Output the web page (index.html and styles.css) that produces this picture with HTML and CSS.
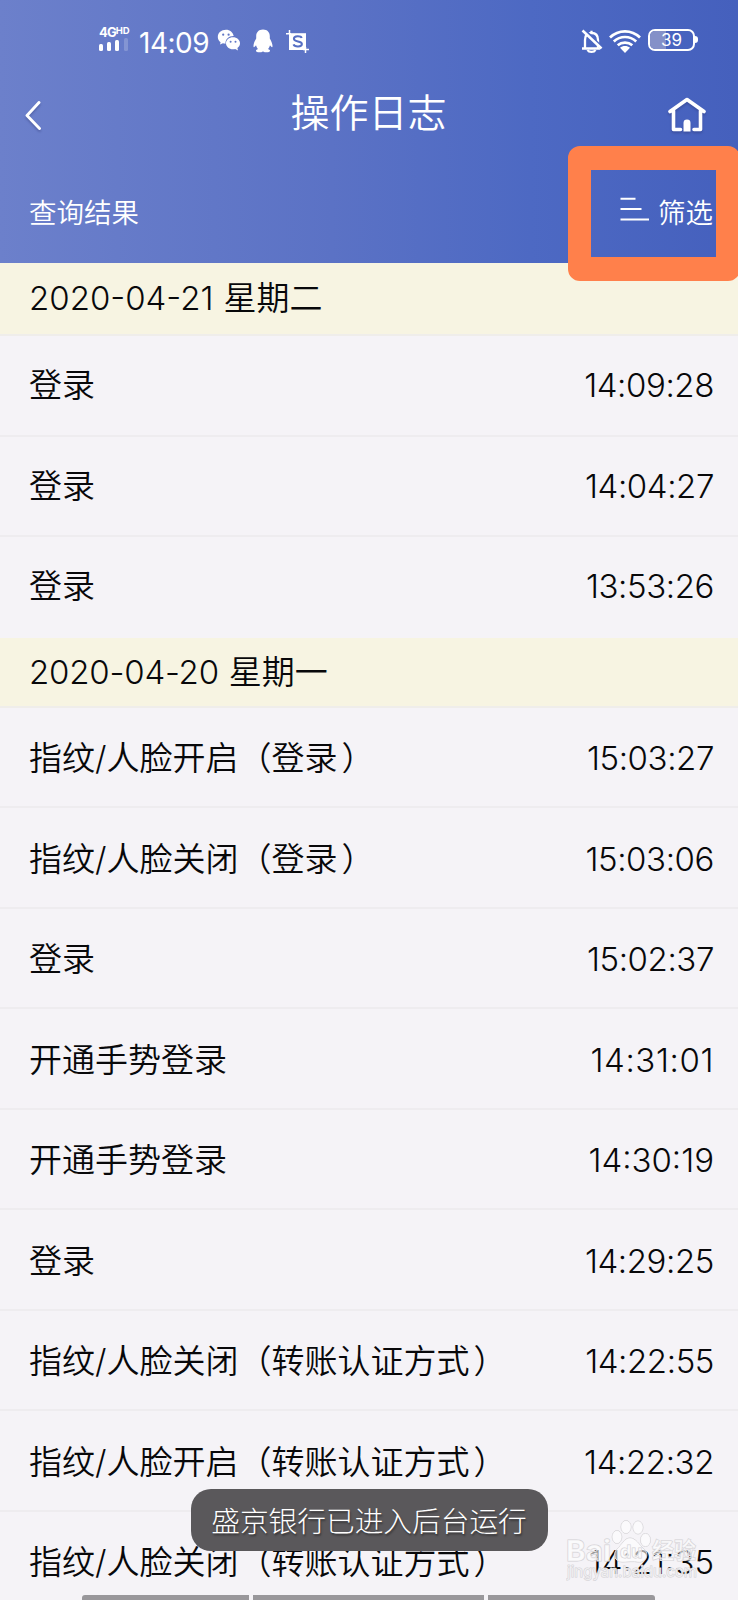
FILE: index.html
```html
<!DOCTYPE html>
<html lang="zh-CN">
<head>
<meta charset="utf-8">
<title>操作日志</title>
<link rel="stylesheet" href="styles.css">
</head>
<body>
<div class="screen">
  <header class="header">
    <div class="status">
      <div class="network">
        <div class="network-label">4G<span class="hd">HD</span></div>
        <div class="bars"><i class="b1"></i><i class="b2"></i><i class="b3"></i><i class="b4"></i></div>
      </div>
      <span class="clock">14:09</span>
      <svg class="wechat" width="24" height="24" viewBox="0 0 24 24"><path fill="#fff" d="M9 .8C4.300.8.8 3.900.8 7.900c0 2.200 1.100 4.100 2.800 5.300L3 15.600l2.900-1.300c.9.300 1.700.4 2.600.4-.3-4.500 3.300-7.800 8.200-7.700C16 3.400 13 .8 9 .8Z"/><path fill="#fff" d="M16 8.300c-4 0-7 2.700-7 6s3 6 7 6c.8 0 1.500-.1 2.200-.3l2.800 1.600-.6-2.500c1.600-1.100 2.600-2.800 2.600-4.800 0-3.300-3-6-7-6Z"/><g fill="#6077c5"><circle cx="6.200" cy="5.700" r="1.100"/><circle cx="11.600" cy="5.700" r="1.100"/><circle cx="13.600" cy="12.700" r="1"/><circle cx="18.500" cy="12.700" r="1"/></g></svg>
      <svg class="qq" width="22" height="24" viewBox="0 0 22 24"><path fill="#fff" d="M11 .5c-4.400 0-6.800 2.900-6.800 6.700v2.200C2.800 12 1.300 14.800 1.500 17.500c.1 1.300 1.300.6 2.500-1.200.3 1.500 1 2.700 1.900 3.600-1.200.5-2 1.200-1.900 2 .2 1.700 5.100 1.700 7 .5 1.900 1.200 6.800 1.200 7-.5.1-.8-.7-1.500-1.900-2 .9-.9 1.600-2.100 1.900-3.600 1.200 1.800 2.400 2.500 2.500 1.200.2-2.700-1.300-5.500-2.700-8.100V7.200C17.800 3.400 15.400.5 11 .5Z"/></svg>
      <svg class="snip" width="23" height="23" viewBox="0 0 23 23"><path fill="#fff" d="M3 3.200h17V20H3z"/><path d="M3.500 0v4.500M0 3.700h5M19.500 17v6M17 19.500h6" stroke="#fff" stroke-width="1.500"/><path d="M15.700 8c-.8-2.200-7.800-2.500-7.800.8 0 3.600 8 1.700 8 5.200 0 3.100-7.300 3.200-8.400.4" fill="none" stroke="#566fc4" stroke-width="2"/></svg>
      <div class="status-right">
        <svg width="23" height="25" viewBox="0 0 23 25"><g fill="none" stroke="#fff" stroke-width="2.300"><path d="M1 19.500h18M4 19.500V11c0-5 2.400-7 6.500-7S17 6 17 11v8M10.500 1.800v2"/><path d="M6.500 21c1.500 2.600 6.500 2.600 8 0"/></g><path d="M3.300 1.200 22 20" stroke="#4c68c3" stroke-width="3.500"/><path d="M1.500 1.500 20.500 19.500" stroke="#fff" stroke-width="2.500"/></svg>
        <svg class="wifi" width="32" height="25" viewBox="0 0 32 25"><g fill="none" stroke="#fff" stroke-width="2.700"><path d="M1 8.500C9.500.2 22.500.2 31 8.500"/><path d="M4.800 12.500c6.400-6 16-6 22.400 0"/><path d="M8.700 16.300c4.200-3.700 10.400-3.700 14.600 0"/></g><path fill="#fff" d="M16 24l-5-5.200c2.700-2.400 7.300-2.400 10 0Z"/></svg>
        <div class="battery"><span class="battery-fill"></span><span class="battery-text">39</span></div><span class="battery-tip"></span>
      </div>
    </div>
    <div class="nav">
      <svg class="back" width="18" height="32" viewBox="0 0 18 32"><path d="M15 3.500 3 16.500 15.500 29.500" fill="none" stroke="#fff" stroke-width="2.900" stroke-linecap="round" stroke-linejoin="round"/></svg>
      <h1 class="title">操作日志</h1>
      <svg class="home" width="40" height="37" viewBox="0 0 40 37"><path d="M3 15.500 20 3.500 37 15.500M6.500 14.500v19h7M33.500 14.500v19h-6.500" fill="none" stroke="#fff" stroke-width="3.600" stroke-linecap="round" stroke-linejoin="round"/><path d="M16.500 35.500V27q0-3.400 3.500-3.400T23.500 27v8.500z" fill="#fff"/></svg>
    </div>
    <div class="toolbar">
      <span>查询结果</span>
      <span class="filter"><svg width="29" height="24" viewBox="0 0 29 24"><path d="M.5 1.700h15M.5 12h21M.5 22.500H29" stroke="#fff" stroke-width="2"/></svg>筛选</span>
    </div>
    <div class="highlight"></div>
  </header>
  <main>
    <section>
      <h2 class="date first"><span class="num">2020-04-21</span><span class="weekday">星期二</span></h2>
      <div class="row"><span class="label">登录</span><time>14:09:28</time></div>
      <div class="row"><span class="label">登录</span><time>14:04:27</time></div>
      <div class="row last"><span class="label">登录</span><time>13:53:26</time></div>
    </section>
    <section class="second">
      <h2 class="date"><span class="num">2020-04-20</span><span class="weekday">星期一</span></h2>
      <div class="row"><span class="label">指纹/人脸开启（登录<span class="close">）</span></span><time>15:03:27</time></div>
      <div class="row"><span class="label">指纹/人脸关闭（登录<span class="close">）</span></span><time>15:03:06</time></div>
      <div class="row"><span class="label">登录</span><time>15:02:37</time></div>
      <div class="row"><span class="label">开通手势登录</span><time class="ones">14:31:01</time></div>
      <div class="row"><span class="label">开通手势登录</span><time class="loose">14:30:19</time></div>
      <div class="row"><span class="label">登录</span><time>14:29:25</time></div>
      <div class="row"><span class="label">指纹/人脸关闭（转账认证方式<span class="close">）</span></span><time>14:22:55</time></div>
      <div class="row"><span class="label">指纹/人脸开启（转账认证方式<span class="close">）</span></span><time>14:22:32</time></div>
      <div class="row last"><span class="label">指纹/人脸关闭（转账认证方式<span class="close">）</span></span><time class="loose">14:21:35</time></div>
    </section>
  </main>
  <div class="toast">盛京银行已进入后台运行</div>
  <svg class="watermark" width="140" height="72" viewBox="0 0 140 72">
    <g fill="#fff" fill-opacity=".6" stroke="#d3d1d5" stroke-width="1" paint-order="stroke">
      <ellipse cx="51" cy="23" rx="4.800" ry="6.500"/>
      <ellipse cx="60" cy="13" rx="5" ry="6.500"/><ellipse cx="72" cy="13.500" rx="5" ry="6.500"/><ellipse cx="79.500" cy="26" rx="5" ry="6.500"/>
      <path d="M64 24c-6 0-8 7-13 11-5 5-2 13 5 13 4 0 12-1 16 0 8 1 12-8 6-13-5-4-8-11-14-11Z"/>
      <text class="wm-brand" x="0" y="47" textLength="45" lengthAdjust="spacingAndGlyphs">Bai</text>
      <text class="wm-du" x="54" y="44">du</text>
      <text class="wm-cn" x="86" y="44" textLength="44">经验</text>
      <text class="wm-url" x="1" y="63" textLength="130">jingyan.baidu.com</text>
    </g>
  </svg>
  <div class="homebar"><i></i><i></i><i></i></div>
</div>
</body>
</html>
```
FILE: styles.css
```css
* { box-sizing: border-box; }
body { margin: 0; }
.screen {
  position: relative;
  width: 738px;
  height: 1600px;
  overflow: hidden;
  background: #f5f3f7;
  color: #08080a;
  font-family: Inter, "Noto Sans CJK SC", sans-serif;
  font-weight: 300;
}
.header {
  position: relative;
  height: 262.5px;
  color: #fff;
  background: linear-gradient(90deg, #6c80cb 0%, #5b72c5 45%, #4d69c3 72%, #4560bd 100%);
}
.status { display: flex; height: 78px; padding: 27px 40px 0 99px; align-items: flex-start; }
.network { width: 34px; }
.network-label { font-size: 13px; line-height: 11px; font-weight: 700; letter-spacing: -0.9px; white-space: nowrap; display: flex; }
.hd { font-size: 9.5px; line-height: 8px; letter-spacing: 0; }
.bars { display: flex; align-items: flex-end; gap: 4.200px; height: 13px; }
.bars i { width: 4px; border-radius: 1.500px; background: #fff; }
.bars .b1 { height: 7px; }
.bars .b2 { height: 9px; }
.bars .b3 { height: 11px; }
.bars .b4 { height: 13px; opacity: .2; }
.clock { width: 78px; margin: 1px 0 0 6px; font-size: 28px; line-height: 31px; font-weight: 400; letter-spacing: -0.500px; }
.wechat { margin: 2px 0 0 0; }
.qq { margin: 2px 0 0 11px; }
.snip { margin: 3px 0 0 12px; }
.status-right { display: flex; margin-left: auto; padding-top: 2px; }
.wifi { margin: 0 0 0 5px; }
.battery {
  display: flex;
  align-items: center;
  position: relative;
  width: 47px;
  height: 22px;
  margin-left: 7px;
  border: 2px solid #fff;
  border-radius: 7px;
  overflow: hidden;
}
.battery-fill { width: 16px; height: 18px; background: #8490c8; }
.battery-text { position: absolute; left: 0; width: 43px; text-align: center; font-size: 17px; line-height: 18px; font-weight: 400; }
.battery-tip { width: 3px; height: 7px; margin: 7px 0 0 0; background: #fff; border-radius: 0 3px 3px 0; }
.nav { display: flex; align-items: center; justify-content: space-between; height: 73px; padding: 0 31px 0 24px; }
.back, .home { filter: drop-shadow(0 2px 1px rgba(40, 50, 110, .35)); }
.title { margin: -3px 0 0 28px; font-size: 39px; line-height: 56px; font-weight: 350; }
.toolbar { display: flex; align-items: center; justify-content: space-between; height: 119px; padding: 0 25px 0 29px; font-size: 27.500px; font-weight: 350; }
.filter { display: flex; align-items: center; gap: 9px; }
.filter svg { margin-top: -4px; }
.highlight {
  position: absolute;
  left: 568px;
  top: 146px;
  width: 172px;
  height: 135px;
  border: solid #ff804b;
  border-width: 24px 24px 24px 23px;
  border-radius: 12px;
}
.date {
  display: flex;
  align-items: center;
  height: 70px;
  margin: 0;
  padding: 0 29px;
  background: #f7f4e2;
  border-bottom: 2px solid #efedea;
  font-size: 33px;
  font-weight: 300;
}
.date.first { height: 73.500px; }
.first .num { letter-spacing: 0; }
.num { margin-right: 10px; letter-spacing: -0.200px; }
.weekday { margin-top: -4px; font-weight: 350; }
.row {
  display: flex;
  align-items: center;
  justify-content: space-between;
  height: 100.500px;
  padding: 0 24px 0 29px;
  border-bottom: 2px solid #eeecef;
  font-size: 33px;
}
.row.last { border-bottom-color: transparent; }
.label { margin-top: -4px; font-weight: 350; }
.second .label { margin-top: -1px; }
.second time { margin-top: 3px; }
.close { padding-left: 4px; }
time { letter-spacing: -0.400px; }
time.ones { letter-spacing: 0.600px; }
time.loose { letter-spacing: 0; }
.toast {
  position: absolute;
  left: 190.5px;
  top: 1489px;
  width: 357px;
  height: 61.500px;
  border-radius: 20px;
  background: #5a585b;
  color: #fff;
  font-size: 28.700px;
  line-height: 65px;
  text-align: center;
  white-space: nowrap;
  text-shadow: 1px 2px 2px rgba(0, 0, 0, .4);
}
.watermark { position: absolute; left: 566px; top: 1514px; }
.wm-brand { font: 700 29px Inter, sans-serif; }
.wm-du { font: 700 18px Inter, sans-serif; }
.wm-cn { font: 700 22px "Noto Sans CJK SC", sans-serif; }
.wm-url { font: 400 15px Inter, sans-serif; }
.homebar { position: absolute; left: 82px; bottom: 0; display: flex; gap: 4px; }
.homebar i { height: 5px; background: #99979b; }
.homebar i:nth-child(1) { width: 167px; border-radius: 3px 0 0 0; }
.homebar i:nth-child(2) { width: 231px; }
.homebar i:nth-child(3) { width: 167px; border-radius: 0 3px 0 0; }
```
